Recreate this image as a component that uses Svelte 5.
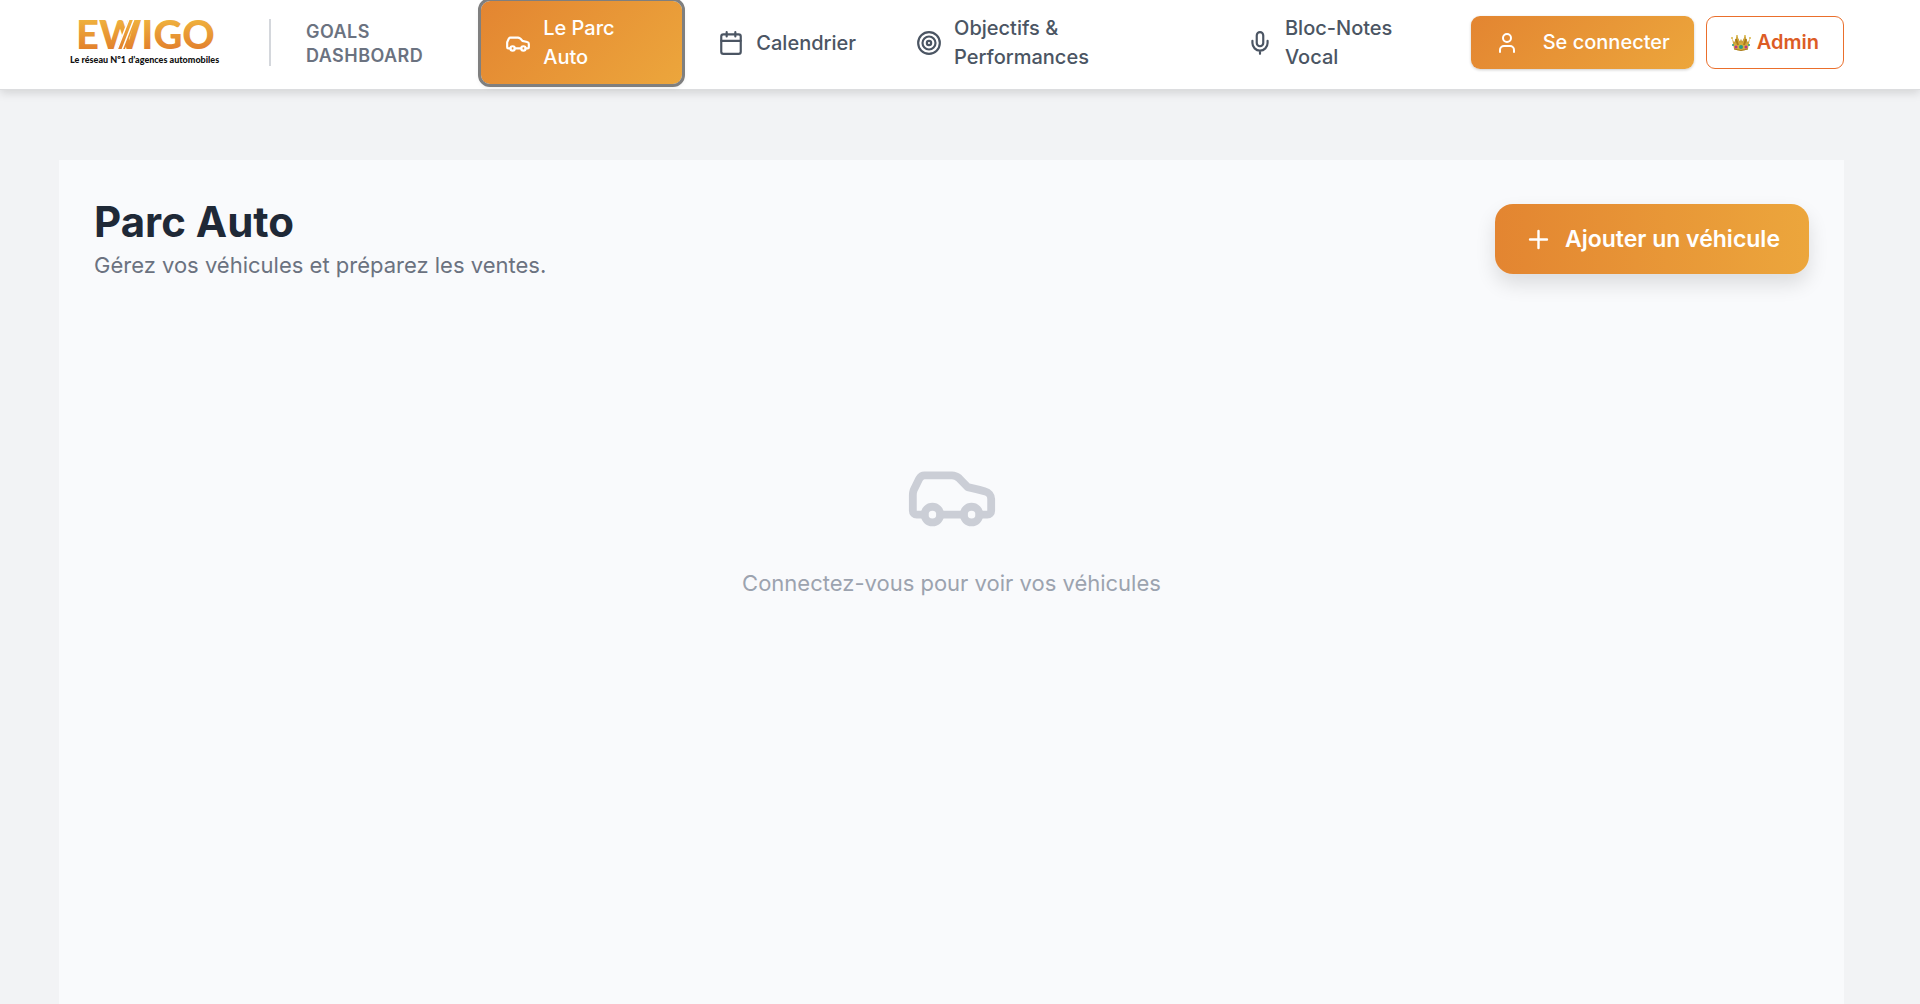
<script lang="ts">
  type Page = { id: string; label: string };

  const pages: Page[] = [
    { id: "parc", label: "Le Parc Auto" },
    { id: "calendrier", label: "Calendrier" },
    { id: "objectifs", label: "Objectifs & Performances" },
    { id: "notes", label: "Bloc-Notes Vocal" },
  ];

  let current = $state("parc");
</script>

{#snippet icon(name: string)}
  <svg class="icon icon-{name}" viewBox="0 0 24 24" aria-hidden="true">
    {#if name === "parc"}
      <path
        d="M19 17h2c.6 0 1-.4 1-1v-3c0-.9-.7-1.7-1.5-1.9C18.7 10.6 16 10 16 10s-1.3-1.4-2.2-2.3c-.5-.4-1.1-.7-1.8-.7H5c-.6 0-1.1.4-1.4.9l-1.4 2.9A3.7 3.7 0 0 0 2 12v4c0 .6.4 1 1 1h2"
      />
      <circle cx="7" cy="17" r="2" />
      <path d="M9 17h6" />
      <circle cx="17" cy="17" r="2" />
    {:else if name === "calendrier"}
      <path d="M8 2v4M16 2v4M3 10h18" />
      <rect x="3" y="4" width="18" height="18" rx="2" />
    {:else if name === "objectifs"}
      <circle cx="12" cy="12" r="10" />
      <circle cx="12" cy="12" r="6" />
      <circle cx="12" cy="12" r="2" />
    {:else if name === "notes"}
      <path d="M12 2a3 3 0 0 0-3 3v7a3 3 0 0 0 6 0V5a3 3 0 0 0-3-3Z" />
      <path d="M19 10v2a7 7 0 0 1-14 0v-2M12 19v3" />
    {:else if name === "user"}
      <path d="M19 21v-2a4 4 0 0 0-4-4H9a4 4 0 0 0-4 4v2" />
      <circle cx="12" cy="7" r="4" />
    {:else if name === "plus"}
      <path d="M5 12h14M12 5v14" />
    {/if}
  </svg>
{/snippet}

<header>
  <div class="bar">
    <div class="brand">
      <svg class="logo" viewBox="0 0 160 54" role="img" aria-label="EWIGO">
        <defs>
          <linearGradient id="gold" gradientUnits="userSpaceOnUse" x1="0" y1="4" x2="0" y2="33">
            <stop offset="0" stop-color="#efb03d" />
            <stop offset="1" stop-color="#e2812d" />
          </linearGradient>
        </defs>
        <text class="wordmark" x="6" y="33" fill="url(#gold)">EWIGO</text>
        <path d="M47 33 L58 4 H66 L55 33Z" fill="url(#gold)" />
        <path class="slash" d="M47 34 L59 3 M52 34 L64 3" />
        <text class="tagline" x="0" y="47">Le réseau Nº1 d’agences automobiles</text>
      </svg>
      <span class="divider"></span>
      <span class="product">Goals Dashboard</span>
    </div>

    <nav>
      {#each pages as page}
        <button
          type="button"
          class="tab"
          class:active={current === page.id}
          onclick={() => (current = page.id)}
        >
          {@render icon(page.id)}
          <span>{page.label}</span>
        </button>
      {/each}
    </nav>

    <div class="account">
      <button type="button" class="login">
        {@render icon("user")}
        <span>Se connecter</span>
      </button>
      <button type="button" class="admin">
        <svg class="crown" viewBox="0 0 20 18" aria-hidden="true">
          <path d="M3 9 L6 2 L9 8 L10 5 L11 8 L14 2 L17 9 L16 14 H4Z" fill="#a87a1c" />
          <path
            d="M1 4 L4 10 L5 4 L6 2 L9 9 L10 5 L11 9 L14 2 L15 4 L16 10 L19 4 L17 15 Q10 18 3 15Z"
            fill="#d5ac3c"
          />
          <path d="M5 5 L7 11 M15 5 L13 11" stroke="#a87a1c" stroke-width="2" />
          <path d="M3 15 Q10 18 17 15" stroke="#a87a1c" fill="none" />
          <g fill="#d9b64a">
            <circle cx="1" cy="4" r="1" />
            <circle cx="6" cy="2" r="1" />
            <circle cx="14" cy="2" r="1" />
            <circle cx="19" cy="4" r="1" />
          </g>
          <circle cx="10" cy="13" r="2" fill="#259b83" />
          <circle cx="5" cy="13" r="1.5" fill="#b5348e" />
          <circle cx="15" cy="13" r="1.5" fill="#b5348e" />
          <circle cx="2" cy="11" r="1" fill="#259b83" />
          <circle cx="18" cy="11" r="1" fill="#259b83" />
        </svg>
        <span>Admin</span>
      </button>
    </div>
  </div>
</header>

<main>
  <div class="heading">
    <div>
      <h1>Parc Auto</h1>
      <p>Gérez vos véhicules et préparez les ventes.</p>
    </div>
    <button type="button" class="add">
      {@render icon("plus")}
      <span>Ajouter un véhicule</span>
    </button>
  </div>

  <div class="empty">
    {@render icon("parc")}
    <p>Connectez-vous pour voir vos véhicules</p>
  </div>
</main>

<style>
  :global(body) {
    background: #f2f3f5;
    font-family: Inter, "Liberation Sans", sans-serif;
    color: #1f2937;
  }

  :global(#app) {
    display: flex;
    flex-direction: column;
    min-height: 100vh;
  }

  button {
    display: flex;
    align-items: center;
    border: none;
    background: none;
    font: inherit;
    cursor: pointer;
  }

  .icon {
    flex-shrink: 0;
    width: 26px;
    height: 26px;
    fill: none;
    stroke: currentColor;
    stroke-width: 2;
    stroke-linecap: round;
    stroke-linejoin: round;
  }

  header {
    background: #fff;
    border-bottom: 1px solid #dcdddf;
    box-shadow: 0 3px 9px rgba(0, 0, 0, 0.13);
  }

  .bar {
    display: flex;
    align-items: center;
    padding: 1px 76px 5px 70px;
  }

  .brand {
    display: flex;
    align-items: center;
    flex-shrink: 0;
  }

  .logo {
    width: 160px;
    height: 54px;
    overflow: visible;
  }

  .wordmark {
    font-family: Lato, sans-serif;
    font-size: 40px;
    font-weight: 900;
  }

  .slash {
    stroke: #fff;
    stroke-width: 1.5;
  }

  .tagline {
    font-family: Lato, sans-serif;
    font-size: 9px;
    font-weight: 900;
    fill: #111;
  }

  .divider {
    width: 2px;
    height: 47px;
    margin: 0 35px 0 39px;
    background: #d4d7dc;
  }

  .product {
    width: min-content;
    padding-top: 2px;
    font-size: 18px;
    line-height: 24px;
    font-weight: 600;
    letter-spacing: 0.025em;
    text-transform: uppercase;
    color: #6b7280;
  }

  nav {
    display: flex;
    flex: 1;
    align-items: center;
    gap: 12px;
    min-width: 0;
    margin: 0 4px 0 58px;
  }

  .tab {
    gap: 12px;
    padding: 13px 24px 12px;
    border-radius: 9px;
    font-size: 20px;
    line-height: 29px;
    font-weight: 500;
    text-align: left;
    color: #4b5563;
  }

  .active {
    background: linear-gradient(135deg, #e38531, #eca63c);
    color: #fff;
    outline: 3px solid #7f7f7f;
    box-shadow: 0 2px 6px rgba(0, 0, 0, 0.15);
  }

  .account {
    display: flex;
    gap: 12px;
    flex-shrink: 0;
    font-size: 20px;
    line-height: 29px;
  }

  .login {
    gap: 24px;
    padding: 12px 24px;
    border-radius: 9px;
    background: linear-gradient(135deg, #e38531, #eca63c);
    font-weight: 500;
    color: #fff;
    box-shadow: 0 1px 3px rgba(0, 0, 0, 0.2);
  }

  .icon-user {
    width: 24px;
    height: 24px;
  }

  .admin {
    gap: 6px;
    padding: 11px 24px;
    border: 1px solid #ea6f2c;
    border-radius: 9px;
    background: #fff;
    font-weight: 600;
    color: #dc5c25;
  }

  .crown {
    width: 20px;
    height: 18px;
  }

  main {
    flex: 1;
    margin: 70px 76px 0 59px;
    padding: 35px;
    background: #f9fafc;
  }

  .heading {
    display: flex;
    align-items: center;
    justify-content: space-between;
  }

  h1 {
    margin: 0;
    font-size: 42px;
    line-height: 53px;
    font-weight: 700;
  }

  p {
    margin: 0;
    font-size: 22px;
    line-height: 35px;
    color: #6b7280;
  }

  .add {
    gap: 12px;
    padding: 17px 29px;
    border-radius: 18px;
    background: linear-gradient(90deg, #e38531, #eca63c);
    font-size: 23px;
    line-height: 36px;
    font-weight: 600;
    color: #fff;
    box-shadow: 0 10px 20px rgba(0, 0, 0, 0.12);
  }

  .icon-plus {
    width: 29px;
    height: 29px;
  }

  .empty {
    display: flex;
    flex-direction: column;
    align-items: center;
    gap: 24px;
    padding-top: 165px;
  }

  .empty .icon {
    width: 94px;
    height: 94px;
    color: #cbced6;
  }

  .empty p {
    color: #9ca3af;
  }
</style>
